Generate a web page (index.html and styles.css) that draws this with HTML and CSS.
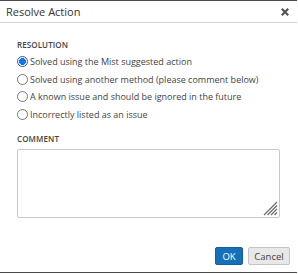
FILE: index.html
```html
<!DOCTYPE html>
<html>
<head>
<meta charset="utf-8">
<link rel="stylesheet" href="styles.css">
</head>
<body>
<div class="dialog">
  <div class="header">
    <span class="title">Resolve Action</span>
    <span class="close">
      <svg width="8" height="8" viewBox="0 0 8 8"><path d="M0.8 0.8 L7.2 7.2 M7.2 0.8 L0.8 7.2" stroke="#555" stroke-width="2.2"/></svg>
    </span>
  </div>
  <div class="content">
    <div class="label">RESOLUTION</div>
    <div class="options">
      <label class="option"><span class="radio checked"></span>Solved using the Mist suggested action</label>
      <label class="option"><span class="radio"></span>Solved using another method (please comment below)</label>
      <label class="option"><span class="radio"></span>A known issue and should be ignored in the future</label>
      <label class="option"><span class="radio"></span>Incorrectly listed as an issue</label>
    </div>
    <div class="label comment-label">COMMENT</div>
    <div class="textarea">
      <svg class="grip" width="15" height="15" viewBox="0 0 15 15">
        <path d="M1 14 L14 1 M4.5 14 L14 4.5 M8 14 L14 8 M11.5 14 L14 11.5" stroke="#6a6a6a" stroke-width="1.2"/>
      </svg>
    </div>
  </div>
  <div class="footer">
    <button class="btn ok">OK</button>
    <button class="btn cancel">Cancel</button>
  </div>
</div>
</body>
</html>
```
FILE: styles.css
```css
html, body {
  margin: 0;
  padding: 0;
  background: #fff;
}
body {
  font-family: "Open Sans", "Liberation Sans", sans-serif;
  color: #333;
}
.dialog {
  width: 297px;
  height: 271px;
  border-top: 1px solid #4a4a4a;
  border-bottom: 1px solid #4a4a4a;
  display: flex;
  flex-direction: column;
}
.header {
  height: 21px;
  border-bottom: 1px solid #d4d4d4;
  display: flex;
  align-items: center;
  justify-content: space-between;
  padding: 0 8px 0 6px;
}
.title {
  font-size: 11px;
  color: #333;
}
.close {
  display: flex;
  align-items: center;
}
.content {
  padding: 16px 17px 0 17px;
  flex: 1;
}
.label {
  font-size: 8px;
  font-weight: 600;
  color: #444;
  letter-spacing: 0.1px;
  line-height: 12px;
}
.options {
  margin-top: 2px;
  display: flex;
  flex-direction: column;
}
.option {
  display: flex;
  align-items: center;
  height: 17.5px;
  font-size: 9px;
  color: #444;
  white-space: nowrap;
}
.radio {
  width: 9px;
  height: 9px;
  border: 1px solid #777;
  border-radius: 50%;
  margin-right: 2px;
  box-sizing: content-box;
  flex: none;
}
.radio.checked {
  border-color: #1a5fb4;
  background: radial-gradient(circle, #1a73e8 0 3.2px, #fff 3.7px);
}
.comment-label {
  margin-top: 10px;
}
.textarea {
  margin-top: 4px;
  width: 261px;
  height: 67px;
  border: 1px solid #c8c8c8;
  border-radius: 2px;
  position: relative;
}
.grip {
  position: absolute;
  right: 1px;
  bottom: 1px;
}
.footer {
  display: flex;
  justify-content: flex-end;
  gap: 5px;
  padding: 0 7px 7px 0;
}
.btn {
  font-family: "Open Sans", "Liberation Sans", sans-serif;
  font-size: 9.5px;
  height: 18px;
  padding: 0;
  border-radius: 2px;
  box-sizing: border-box;
}
.ok {
  background: #1670b8;
  border: 1px solid #125f9c;
  color: #fff;
  width: 28px;
}
.cancel {
  background: #e8e8e8;
  border: 1px solid #c4c4c4;
  color: #444;
  width: 42px;
}
```
